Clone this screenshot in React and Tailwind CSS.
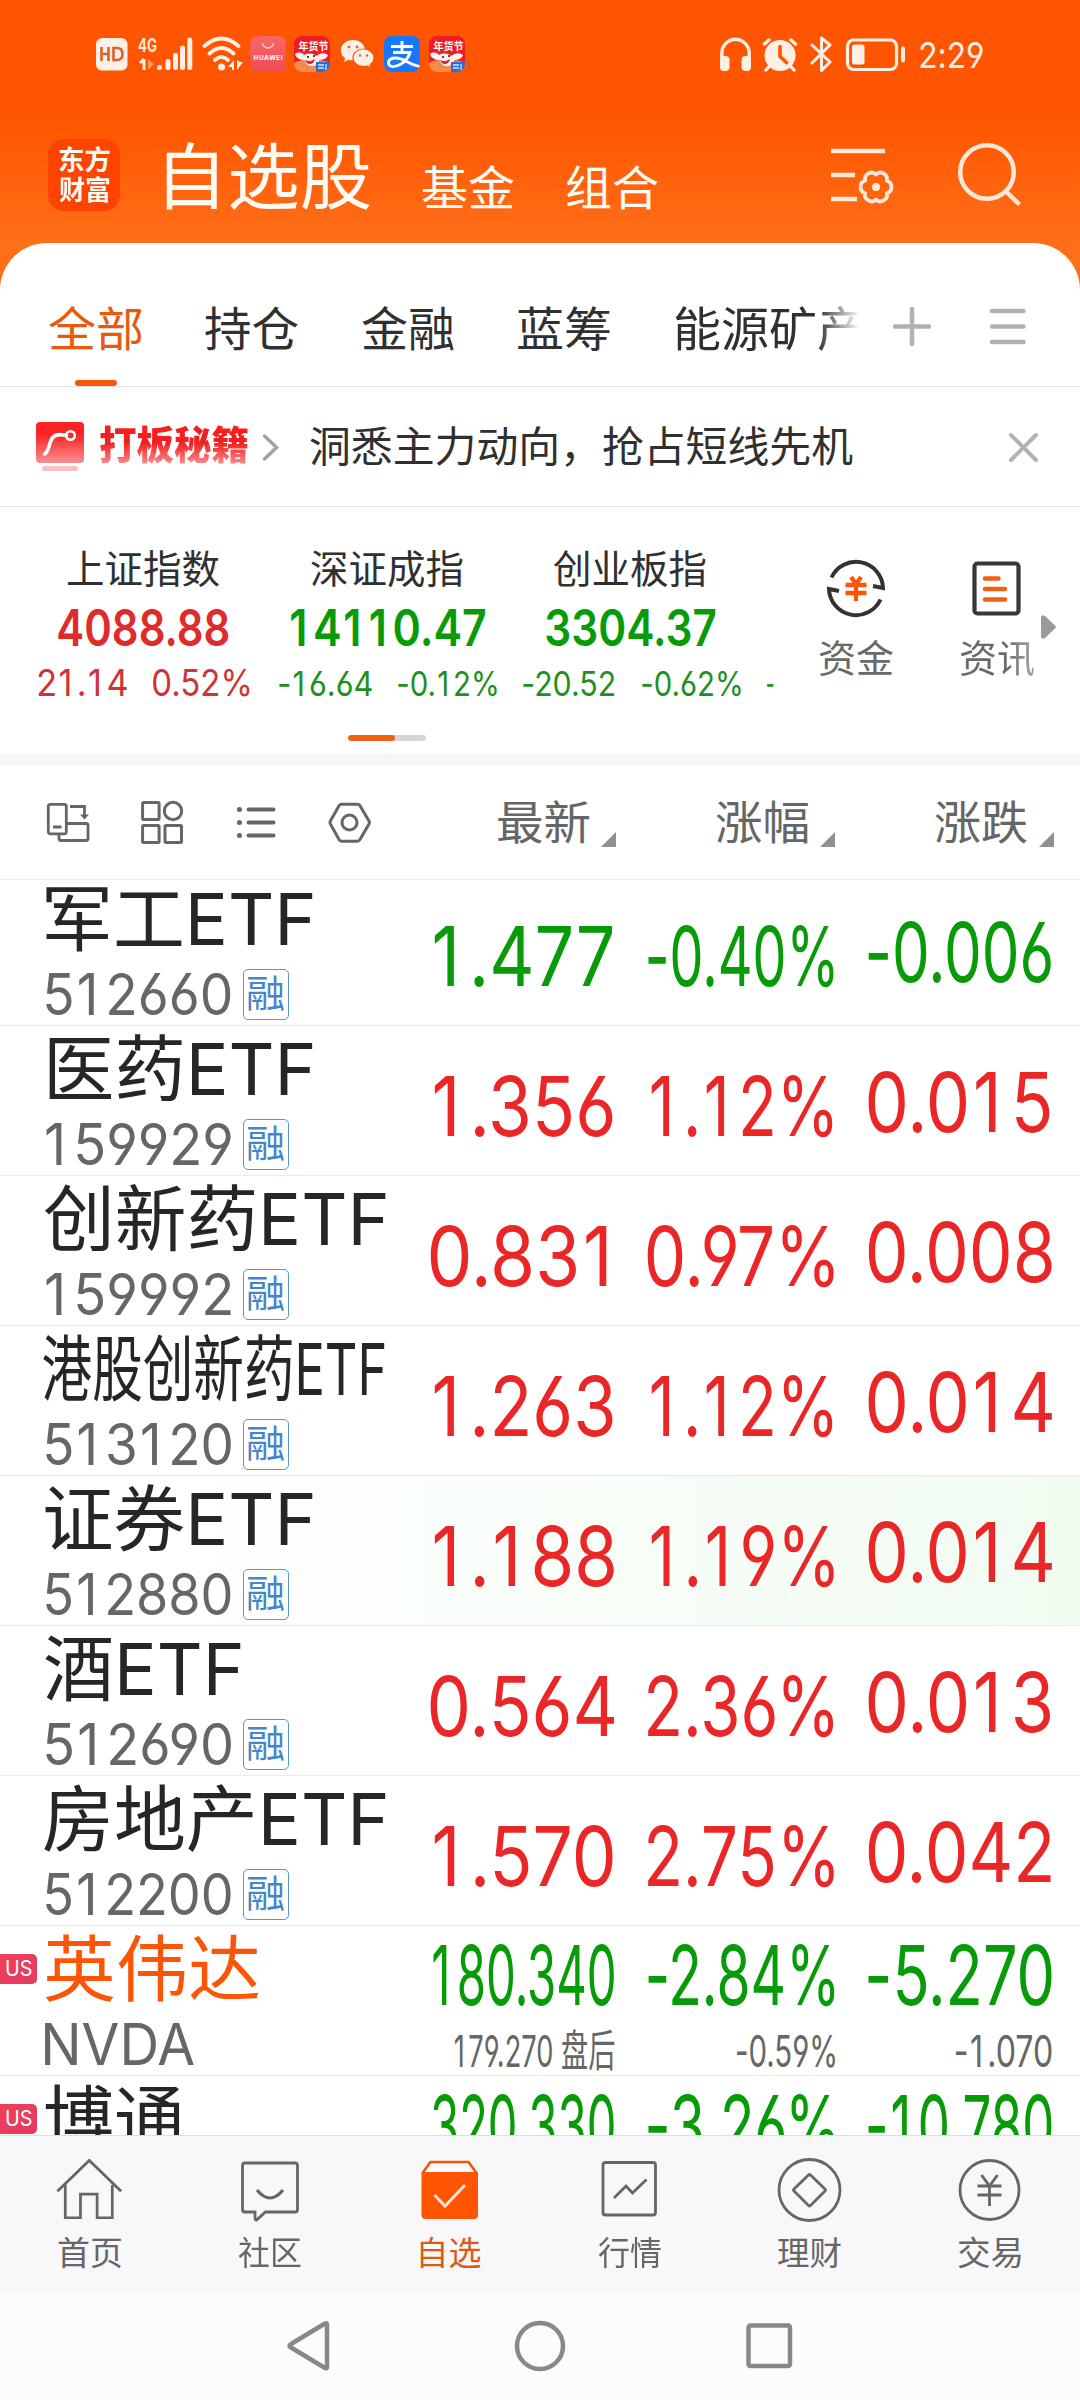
import { useLayoutEffect, useRef } from "react";
import clsx from "clsx";

const RED = "text-[#ea2626]";
const GREEN = "text-[#079c07]";

const stocks = [
  { name: "军工ETF", nameBox: "ml-[46px] w-[266px]", code: "512660", price: "1.477", priceBox: "ml-[434px] w-[178px]", pct: "-0.40%", pctBox: "ml-[648px] w-[186px]", change: "-0.006", changeBox: "w-[183px]", down: true },
  { name: "医药ETF", nameBox: "ml-[49px] w-[263px]", code: "159929", price: "1.356", priceBox: "ml-[434px] w-[179px]", pct: "1.12%", pctBox: "ml-[651px] w-[182px]", change: "0.015", changeBox: "w-[182px]" },
  { name: "创新药ETF", nameBox: "ml-[44px] w-[341px]", code: "159992", price: "0.831", priceBox: "ml-[430px] w-[177px]", pct: "0.97%", pctBox: "ml-[647px] w-[187px]", change: "0.008", changeBox: "w-[184px]" },
  { name: "港股创新药ETF", nameBox: "ml-[43px] w-[341px]", code: "513120", price: "1.263", priceBox: "ml-[434px] w-[179px]", pct: "1.12%", pctBox: "ml-[651px] w-[182px]", change: "0.014", changeBox: "w-[184px]" },
  { name: "证券ETF", nameBox: "ml-[45px] w-[267px]", code: "512880", price: "1.188", priceBox: "ml-[434px] w-[180px]", pct: "1.19%", pctBox: "ml-[651px] w-[183px]", change: "0.014", changeBox: "w-[184px]", flash: true },
  { name: "酒ETF", nameBox: "ml-[45px] w-[195px]", code: "512690", price: "0.564", priceBox: "ml-[430px] w-[184px]", pct: "2.36%", pctBox: "ml-[648px] w-[186px]", change: "0.013", changeBox: "w-[183px]" },
  { name: "房地产ETF", nameBox: "ml-[44px] w-[341px]", code: "512200", price: "1.570", priceBox: "ml-[434px] w-[179px]", pct: "2.75%", pctBox: "ml-[648px] w-[186px]", change: "0.042", changeBox: "w-[183px]" },
];

const usStocks = [
  { name: "英伟达", nameBox: "w-[214px] text-[#fb5607]", code: "NVDA", price: "180.340", pct: "-2.84%", change: "-5.270", after: { price: "179.270 盘后", pct: "-0.59%", change: "-1.070" } },
  { name: "博通", nameBox: "w-[138px] text-[#262626]", code: "AVGO", price: "320.330", pct: "-3.26%", change: "-10.780" },
];

// side padding that brings a "1" up to the width of the other digits, in em
const ONE_LEFT = 0.04;
const ONE_RIGHT = 0.13;

// Squeezes or stretches a single line of text so its ink fills the box width
const Fit = ({ className, children }) => {
  const ref = useRef(null);

  useLayoutEffect(() => {
    const el = ref.current;
    const text = el.textContent;
    const style = getComputedStyle(el);
    const size = parseFloat(style.fontSize);
    const ctx = document.createElement("canvas").getContext("2d");
    ctx.font = `${style.fontWeight} ${style.fontSize} ${style.fontFamily}`;
    const m = ctx.measureText(text);
    const left = -m.actualBoundingBoxLeft + (text.startsWith("1") ? ONE_LEFT * size : 0);
    const right = m.width - m.actualBoundingBoxRight + (text.endsWith("1") ? ONE_RIGHT * size : 0);
    const scale = el.parentElement.clientWidth / (el.offsetWidth - left - right);
    el.style.transform = `translateX(${-left * scale}px) scaleX(${scale})`;
  }, [children]);

  return (
    <span className={clsx("block shrink-0 leading-none whitespace-nowrap", className)}>
      <span ref={ref} className="block w-max origin-left">
        {children.split(/(1)/).map((part, i) =>
          part === "1" ? (
            <span key={i} className="pr-[0.13em] pl-[0.04em]">1</span>
          ) : (
            part
          )
        )}
      </span>
    </span>
  );
};

const PromoAppIcon = ({ className }) => (
  <svg className={className} width="36" height="36" viewBox="0 0 36 36">
    <defs>
      <clipPath id="promoClip">
        <rect width="36" height="36" rx="8" />
      </clipPath>
    </defs>
    <g clipPath="url(#promoClip)">
      <rect width="36" height="36" fill="#ee1d23" />
      <path d="M0 27c8-5 26-5 36 0v10H0z" fill="#f58a4b" />
      <path d="M1 18c3-2 7-2 9 1 4-2 9-2 12 1 4-3 8-4 12-1-1 4-6 5-9 5-1 4-4 6-7 6s-7-2-7-6c-5 0-9-2-10-6z" fill="#fff1ee" />
      <path d="M11 24c3 2 7 1 10-1-1 4-3 5-5 5s-4-1-5-4z" fill="#d5273a" />
      <circle cx="14" cy="21" r="1.100" fill="#222" />
      <circle cx="20" cy="20" r="1.100" fill="#222" />
      <rect x="22" y="26" width="14" height="10" fill="#2b6fd0" />
      <path d="M24 29h6M24 32h6M32 28v6" stroke="#cfe2ff" strokeWidth="1.300" />
    </g>
    <text x="19.500" y="13.500" textAnchor="middle" fontSize="10" fontWeight="700" fill="#fff">年货节</text>
  </svg>
);

const StatusBar = () => (
  <div className="flex h-[108px] items-start pt-9 text-[#ffefe4]">
    <svg className="ml-[95px]" width="34" height="36" viewBox="0 0 34 36">
      <rect x="1" y="2" width="31.500" height="32.500" rx="6" fill="currentColor" />
      <path d="M6.500 11v14M13.500 11v14M6.500 18h7M18.500 12v12h3.500q5.500 0 5.500-6t-5.500-6z" fill="none" stroke="#d9622c" strokeWidth="2.600" />
    </svg>
    <svg className="ml-[9px] overflow-visible" width="56" height="36" viewBox="0 0 56 36">
      <text x="0" y="15.500" fontSize="19" fontWeight="600" fill="currentColor" textLength="19" lengthAdjust="spacingAndGlyphs">4G</text>
      <path d="M6 23v11M6 23l-4 4" stroke="currentColor" strokeWidth="2.800" fill="none" />
      <path d="M10 23v11l6-6z" fill="#ff9a63" />
      <g stroke="currentColor" strokeWidth="5" strokeLinecap="round">
        <path d="M21.500 31.500v.1M30 25.500v6M37.500 19.500v12M44.500 12v19.500M51.800 4v27.500" />
      </g>
    </svg>
    <svg className="ml-[8px]" width="42" height="36" viewBox="0 0 42 36">
      <g fill="none" stroke="currentColor" strokeWidth="3.800" strokeLinecap="round">
        <path d="M2.500 10q17-15 34 0M7.500 17.500q12-11 24 0M13 24q6.500-6 13 0" />
      </g>
      <circle cx="19.500" cy="31" r="3.500" fill="currentColor" />
      <path d="M32 24v10h-2v-3h-4zM35 24v10l6-8h-3z" fill="currentColor" />
    </svg>
    <svg className="ml-[6px]" width="36" height="36" viewBox="0 0 36 36">
      <defs>
        <linearGradient id="storeGradient" x1="0" y1="0" x2="0" y2="1">
          <stop stopColor="#f9696a" />
          <stop offset="1" stopColor="#ee4a52" />
        </linearGradient>
      </defs>
      <rect width="36" height="36" rx="8" fill="url(#storeGradient)" />
      <path d="M12.500 7a5.500 5 0 0 0 11 0" fill="none" stroke="#ffd9d6" strokeWidth="1.400" />
      <text x="3.500" y="24" fontSize="6.500" fontWeight="700" fill="#fff" textLength="29">HUAWEI</text>
    </svg>
    <PromoAppIcon className="ml-[8px]" />
    <svg className="ml-[10px]" width="36" height="36" viewBox="0 0 36 36">
      <path d="M13 4C6 4 .8 8.700.8 14.300c0 3.200 1.600 5.900 4.200 7.800L4 26l4.500-2.300c1.500.4 3 .6 4.500.6 7 0 12-4.500 12-10S20 4 13 4z" fill="currentColor" />
      <path d="M23.500 13C17.500 13 13 17 13 21.800s4.500 8.700 10.500 8.700c1.300 0 2.600-.2 3.800-.5L31 32l-.8-3.400c2.400-1.600 3.800-4 3.800-6.800 0-4.800-4.500-8.800-10.500-8.800z" fill="currentColor" stroke="#ff5500" strokeWidth="1.200" />
      <g fill="#e0682f">
        <circle cx="9" cy="11" r="1.400" />
        <circle cx="17" cy="11" r="1.400" />
        <circle cx="20" cy="19.500" r="1.200" />
        <circle cx="27" cy="19.500" r="1.200" />
      </g>
    </svg>
    <svg className="ml-[8px]" width="36" height="36" viewBox="0 0 36 36">
      <rect width="36" height="36" rx="8" fill="#1677ff" />
      <path d="M7 10.500h22M18 5v11M9 16.500h17q-2 7-9 11.500-5 3-9 2.500-4-1-3.500-4.500 1-4 7-4 5 0 11 3.500 6 3.500 13 5" fill="none" stroke="#fff" strokeWidth="2.800" />
    </svg>
    <PromoAppIcon className="ml-[9px]" />

    <svg className="ml-[254px]" width="34" height="36" viewBox="0 0 34 36">
      <path d="M2.800 25V17.500a13 13.500 0 0 1 27.400 0V25" fill="none" stroke="currentColor" strokeWidth="3.400" />
      <rect x="1" y="20" width="9.500" height="15" rx="4" fill="currentColor" />
      <rect x="22.500" y="20" width="9.500" height="15" rx="4" fill="currentColor" />
    </svg>
    <svg className="ml-[9px]" width="36" height="36" viewBox="0 0 36 36">
      <circle cx="18" cy="19.500" r="15.500" fill="currentColor" />
      <path d="M2.500 8L7 4M33.500 8L29 4M7.500 30l-3.500 4M28.500 30l3.500 4" stroke="currentColor" strokeWidth="3.400" strokeLinecap="round" />
      <path d="M18 10.500v10l6.500 6" fill="none" stroke="#ff5500" strokeWidth="3.600" strokeLinecap="round" />
    </svg>
    <svg className="ml-[11px]" width="26" height="36" viewBox="0 0 26 36">
      <path d="M3 9l18 17-8.500 8.500V2L21 9 3 27" fill="none" stroke="currentColor" strokeWidth="3" strokeLinejoin="round" strokeLinecap="round" />
    </svg>
    <svg className="ml-[10px]" width="62" height="36" viewBox="0 0 62 36">
      <rect x="2.500" y="4" width="49" height="29.500" rx="6" fill="none" stroke="currentColor" strokeWidth="3.200" />
      <rect x="7" y="8.500" width="12.500" height="20" rx="2.500" fill="currentColor" />
      <rect x="56" y="10.500" width="4" height="16" rx="2" fill="currentColor" />
    </svg>
    <Fit className="mt-[1px] ml-[13px] w-[63px] text-[36px]">2:29</Fit>
  </div>
);

const TitleBar = () => (
  <div className="flex h-[135px] items-start text-[#fffaf2]">
    <div className="mt-[31px] ml-12 flex size-[72px] flex-col items-center rounded-2xl bg-[#ff4300] pt-[8px] font-bold">
      <Fit className="h-[30px] w-[51px] text-[27px]">东方</Fit>
      <Fit className="w-[51px] text-[27px]">财富</Fit>
    </div>
    <Fit className="mt-[33px] ml-[46px] w-[204px] text-[72px]">自选股</Fit>
    <Fit className="mt-[56px] ml-[52px] w-[92px] text-[47px]">基金</Fit>
    <Fit className="mt-[56px] ml-[52px] w-[92px] text-[47px]">组合</Fit>
    <svg className="mt-[38px] ml-[172px] text-[#ffe9d6]" width="66" height="60" viewBox="0 0 66 60" fill="none" stroke="currentColor" strokeWidth="4.500">
      <path d="M1 5h54M1 29h24M1 53h26" />
      <g transform="translate(46 41)">
        <path d="M0-12.500C4.500-17 12.500-12.400 10.800-6.250C17-4.600 17 4.600 10.800 6.250C12.500 12.400 4.500 17 0 12.500C-4.500 17-12.500 12.400-10.800 6.250C-17 4.600-17-4.600-10.800-6.250C-12.500-12.400-4.500-17 0-12.500Z" strokeWidth="3.800" strokeLinejoin="round" />
        <circle r="4" fill="currentColor" stroke="none" />
      </g>
    </svg>
    <svg className="mt-[33px] ml-[61px] text-[#ffe9d6]" width="66" height="66" viewBox="0 0 66 66" fill="none" stroke="currentColor" strokeWidth="4.500">
      <circle cx="30" cy="31" r="26.800" />
      <path d="M48.500 50l14 13.500" />
    </svg>
  </div>
);

const Tabs = () => (
  <div className="flex h-36 items-start border-b border-[#e4e4e6] text-[47px] text-[#303030]">
    <div className="mt-[62px] ml-[49px] flex flex-col items-center text-[#ea5a0c]">
      <Fit className="w-[93px]">全部</Fit>
      <span className="mt-[28px] h-[6px] w-[42px] rounded-full bg-[#fb5607]" />
    </div>
    <Fit className="mt-[62px] ml-[63px] w-[93px]">持仓</Fit>
    <Fit className="mt-[62px] ml-[64px] w-[92px]">金融</Fit>
    <Fit className="mt-[62px] ml-[64px] w-[92px]">蓝筹</Fit>
    <Fit className="mt-[62px] ml-[65px] w-[187px] [mask-image:linear-gradient(to_right,black_76%,transparent_99%)]">能源矿产</Fit>
    <svg className="mt-[62px] ml-[29px]" width="44" height="44" viewBox="0 0 44 44" stroke="#b2b2b2" strokeWidth="4.500" strokeLinecap="round">
      <path d="M4 21.500h34M21 4v35" />
    </svg>
    <svg className="mt-[62px] ml-[53px]" width="44" height="44" viewBox="0 0 44 44" stroke="#b2b2b2" strokeWidth="4.500" strokeLinecap="round">
      <path d="M4 6h31.500M4 21.500h31.500M4 37h31.500" />
    </svg>
  </div>
);

const Banner = () => (
  <div className="flex h-[120px] items-start border-b border-[#e4e4e6]">
    <svg className="mt-[35px] ml-9" width="48" height="50" viewBox="0 0 48 50">
      <defs>
        <linearGradient id="hotGradient" x1="0" y1="0" x2="0" y2="1">
          <stop offset="0.300" stopColor="#fb2323" />
          <stop offset="1" stopColor="#f88f92" />
        </linearGradient>
      </defs>
      <rect width="48" height="41" rx="4" fill="url(#hotGradient)" />
      <path d="M8.500 32q3-1 5.500-11t13-8h3.500" fill="none" stroke="#fff" strokeWidth="3.600" strokeLinecap="round" />
      <circle cx="34.500" cy="13.500" r="4.300" fill="none" stroke="#fff" strokeWidth="2.600" />
      <rect x="6" y="44" width="36" height="5" rx="2" fill="#fbc0c0" />
    </svg>
    <Fit className="mt-[38px] ml-4 w-[148px] text-[39px] font-black text-transparent *:bg-[linear-gradient(to_bottom,#f41f1f_45%,#fa8a8a)] *:bg-clip-text">
      打板秘籍
    </Fit>
    <svg className="mt-[46px] ml-[14px]" width="18" height="30" viewBox="0 0 18 30" fill="none" stroke="#a3a3a3" strokeWidth="3.500" strokeLinecap="round">
      <path d="M2.500 3l12 11.500L2.500 26" />
    </svg>
    <Fit className="mt-[39px] ml-[30px] w-[543px] text-[42px] text-[#303030]">洞悉主力动向，抢占短线先机</Fit>
    <svg className="mt-[44px] ml-[154px]" width="34" height="34" viewBox="0 0 34 34" stroke="#b2b2b2" strokeWidth="4" strokeLinecap="round">
      <path d="M4 4l25 25M29 4L4 29" />
    </svg>
  </div>
);

const Indexes = () => (
  <div className="flex h-[246px] items-start overflow-hidden">
    <div className="flex w-[783px] flex-col">
      <div className="flex pt-[42px] text-[39px] text-[#303030]">
        <Fit className="ml-[67px] w-[152px]">上证指数</Fit>
        <Fit className="ml-[92px] w-[152px]">深证成指</Fit>
        <Fit className="ml-[91px] w-[152px]">创业板指</Fit>
      </div>
      <div className="flex pt-[14px] text-[51px] font-semibold">
        <Fit className="ml-[58px] w-[171px] text-[#df2b2b]">4088.88</Fit>
        <Fit className={clsx("ml-[62px] w-[195px]", GREEN)}>14110.47</Fit>
        <Fit className={clsx("ml-[60px] w-[170px]", GREEN)}>3304.37</Fit>
      </div>
      <div className="flex items-end pt-[11px] text-[34px] text-[#1f8f1f]">
        <Fit className="ml-[38px] w-[89px] text-[37px] text-[#cf3434]">21.14</Fit>
        <Fit className="ml-[26px] w-[97px] text-[37px] text-[#cf3434]">0.52%</Fit>
        <Fit className="ml-[29px] w-[93px]">-16.64</Fit>
        <Fit className="ml-[26px] w-[99px]">-0.12%</Fit>
        <Fit className="ml-[26px] w-[92px]">-20.52</Fit>
        <Fit className="ml-[27px] w-[99px]">-0.62%</Fit>
        <Fit className="ml-[26px] w-[7px]">-</Fit>
      </div>
      <div className="mt-[34px] ml-[348px] h-[6px] w-[78px] overflow-hidden rounded-full bg-[#d3d7da]">
        <div className="h-full w-[47px] rounded-full bg-[#f05f14]" />
      </div>
    </div>
    <div className="ml-9 flex flex-col items-center pt-[50px] text-[38px] text-[#6a6a6a]">
      <svg width="62" height="62" viewBox="0 0 62 62" fill="none">
        <g stroke="#333" strokeWidth="4">
          <path d="M6.500 20.500A27 27 0 0 1 58 31l-10-2" />
          <path d="M55.500 42.500A27 27 0 0 1 4 32l10 2" />
        </g>
        <path d="M26 20l5 7 5-7M20.500 28h21M20.500 36h21M31 27v17" stroke="#fb5607" strokeWidth="4.300" />
      </svg>
      <Fit className="mt-[20px] w-[74px]">资金</Fit>
    </div>
    <div className="ml-[67px] flex flex-col items-center pt-[50px] text-[38px] text-[#6a6a6a]">
      <svg width="62" height="62" viewBox="0 0 62 62" fill="none">
        <rect x="8.500" y="6.500" width="44" height="50" rx="3" stroke="#383838" strokeWidth="4.200" />
        <path d="M19 21.500h13.500M19 32h20M19 42.500h20" stroke="#f05f14" strokeWidth="4.500" strokeLinecap="round" />
      </svg>
      <Fit className="mt-[20px] w-[74px] [mask-image:linear-gradient(to_right,black_60%,#0009)]">资讯</Fit>
    </div>
    <svg className="mt-[107px] ml-[7px]" width="16" height="26" viewBox="0 0 16 26">
      <path d="M0 3q1-3 4-1l10.500 10q1 1 0 2L4 24q-3 2-4-1z" fill="#9a9a9a" />
    </svg>
  </div>
);

const SortMark = ({ className }) => (
  <svg className={clsx("mt-[67px] shrink-0", className)} width="15" height="15" viewBox="0 0 15 15">
    <path d="M15 0v15H0z" fill="#8f8f96" />
  </svg>
);

const ListHeader = () => (
  <div className="flex h-[115px] items-start border-b border-[#ebebeb] text-[46px] text-[#666]">
    <svg className="mt-[35px] ml-[46px]" width="46" height="44" viewBox="0 0 46 44" fill="none" stroke="currentColor" strokeWidth="2.800">
      <rect x="2.300" y="4.300" width="18" height="29.500" rx="2" />
      <path d="M7 27h8.500M24 6.500h14.500v9M13 34v4.500q0 2 2 2h25q2 0 2-2v-13q0-2-2-2H21" />
      <path d="M34 14.500h9l-4.500 5z" fill="currentColor" stroke="none" />
    </svg>
    <svg className="ml-[48px] mt-[35px]" width="46" height="46" viewBox="0 0 46 46" fill="none" stroke="currentColor" strokeWidth="3">
      <rect x="2.600" y="2.600" width="16.500" height="17" rx="1" />
      <circle cx="33" cy="11" r="8.700" />
      <rect x="2.600" y="25.500" width="16.500" height="17" rx="1" />
      <rect x="25" y="25.500" width="16.500" height="17" rx="1" />
    </svg>
    <svg className="mt-[36px] ml-[50px]" width="46" height="44" viewBox="0 0 46 44" fill="none" stroke="currentColor" strokeWidth="4" strokeLinecap="round">
      <path d="M12.500 8.500h25M12.500 21.500h25M12.500 34.500h25" />
      <path d="M3.500 8.500v.1M3.500 21.500v.1M3.500 34.500v.1" strokeWidth="5" />
    </svg>
    <svg className="mt-[36px] ml-[46px]" width="46" height="44" viewBox="0 0 46 44" fill="none" stroke="currentColor" strokeWidth="3">
      <path d="M13.500 3.200h16q1.500 0 2.500 1.500l9 15.300q.8 1.500 0 3l-9 15.500q-1 1.700-2.500 1.700h-16q-1.500 0-2.500-1.700L2.400 23q-.8-1.500 0-3L11 4.700q1-1.500 2.500-1.500z" />
      <circle cx="21.500" cy="21.500" r="7.500" strokeWidth="3" />
    </svg>
    <Fit className="mt-[34px] ml-[124px] w-[92px]">最新</Fit>
    <SortMark className="ml-[11px]" />
    <Fit className="mt-[34px] ml-[100px] w-[92px]">涨幅</Fit>
    <SortMark className="ml-[12px]" />
    <Fit className="mt-[34px] ml-[100px] w-[92px]">涨跌</Fit>
    <SortMark className="ml-[12px]" />
  </div>
);

// name column on the left, the three figures share the same grid cell row
const StockRow = ({ stock }) => (
  <div
    className={clsx(
      "grid h-[150px] shrink-0 grid-cols-1 border-b border-[#ebebeb] *:col-start-1 *:row-start-1",
      stock.flash && "bg-linear-to-r from-white from-10% to-[#f1fcf1]"
    )}
  >
    <div className="pt-[7px]">
      <Fit className={clsx("text-[72px] text-[#262626]", stock.nameBox)}>{stock.name}</Fit>
      <div className="mt-[11px] ml-[46px] flex items-start">
        <Fit className="w-[185px] text-[57px] text-[#666]">{stock.code}</Fit>
        <span className="mt-[3px] ml-3 flex h-[51px] w-[46px] justify-center rounded-[5px] border-[1.5px] border-[#5d95d0] pt-[4px] text-[38px] text-[#4585c9]">
          <Fit className="w-[36px]">融</Fit>
        </span>
      </div>
    </div>
    <div className={clsx("pt-[39px] text-[83px]", stock.down ? GREEN : RED)}>
      <Fit className={stock.priceBox}>{stock.price}</Fit>
    </div>
    <div className={clsx("pt-[39px] text-[83px]", stock.down ? GREEN : RED)}>
      <Fit className={stock.pctBox}>{stock.pct}</Fit>
    </div>
    <div className={clsx("pt-[35px] pl-[868px] text-[83px]", stock.down ? GREEN : RED)}>
      <Fit className={stock.changeBox}>{stock.change}</Fit>
    </div>
  </div>
);

const UsStockRow = ({ stock }) => (
  <div className="flex h-[150px] shrink-0 items-start border-b border-[#ebebeb]">
    <span className="mt-[28px] flex h-[30px] w-[37px] rounded-r-[5px] bg-linear-to-br from-[#f0405a] to-[#e23a60] pt-[4px] pl-[6px] text-white">
      <Fit className="w-[26px] text-[21px]">US</Fit>
    </span>
    <div className="ml-[8px] w-[388px] pt-[7px]">
      <Fit className={clsx("text-[72px]", stock.nameBox)}>{stock.name}</Fit>
      <Fit className="mt-[11px] w-[149px] text-[57px] text-[#666]">{stock.code}</Fit>
    </div>
    <div className="flex w-[181px] flex-col items-end pt-[8px]">
      <Fit className={clsx("w-[181px] text-[83px]", GREEN)}>{stock.price}</Fit>
      {stock.after && <Fit className="mt-[12px] w-[159px] text-[44px] text-[#666]">{stock.after.price}</Fit>}
    </div>
    <div className="ml-[34px] flex w-[187px] flex-col items-end pt-[8px]">
      <Fit className={clsx("w-[187px] text-[83px]", GREEN)}>{stock.pct}</Fit>
      {stock.after && <Fit className="mt-[12px] w-[98px] text-[44px] text-[#666]">{stock.after.pct}</Fit>}
    </div>
    <div className="ml-[33px] flex w-[184px] flex-col items-end pt-[8px]">
      <Fit className={clsx("w-[184px] text-[83px]", GREEN)}>{stock.change}</Fit>
      {stock.after && <Fit className="mt-[12px] w-[96px] text-[44px] text-[#666]">{stock.after.change}</Fit>}
    </div>
  </div>
);

const tabItems = [
  {
    label: "首页",
    icon: (
      <path d="M3.500 35.500L36 4l32.500 31.500M11.500 29v33.500h15.500V38.500h17v24h15.500V29" transform="translate(0 .5) scale(.98 .98)" />
    ),
  },
  {
    label: "社区",
    icon: (
      <>
        <path d="M11 7h50q2.500 0 2.500 2.500v44q0 2.500-2.500 2.500H31.500l-9 8q-1.500 0-1.500-2v-6h-10q-2.500 0-2.500-2.500v-44Q8.500 7 11 7z" />
        <path d="M23 34q13 16 26 0" strokeWidth="3.200" />
      </>
    ),
  },
  {
    label: "自选",
    active: true,
    icon: (
      <>
        <path d="M7.500 16h56.500v43q0 4-4 4h-48.500q-4 0-4-4z" fill="#ff5500" stroke="none" />
        <path d="M8.500 17l8-11h38l8 11" stroke="#ea5a0c" strokeWidth="2.600" />
        <path d="M20.500 39l10.500 11L51 29" stroke="#ffe6d0" strokeWidth="3" />
      </>
    ),
  },
  {
    label: "行情",
    icon: (
      <>
        <rect x="9" y="6.500" width="52.500" height="52.500" rx="2.500" />
        <path d="M20 42l12-12 6.500 7L52.500 23.500" />
      </>
    ),
  },
  {
    label: "理财",
    icon: (
      <>
        <circle cx="35.500" cy="34" r="30.500" />
        <path d="M34.500 19q1-1 2 0l14.500 14q1 1 0 2L36.500 49.500q-1 1-2 0L20 35q-1-1 0-2z" />
      </>
    ),
  },
  {
    label: "交易",
    icon: (
      <>
        <circle cx="35.500" cy="34" r="29.500" />
        <path d="M27.500 19l8 11 8-11M23.500 30h24M23.500 39h24M35.500 30v20" />
      </>
    ),
  },
];

const BottomTabs = () => (
  <div className="grid h-[157px] grid-cols-6 border-t border-[#dedee0] bg-[#f8f8fa]">
    {tabItems.map((item) => (
      <div
        key={item.label}
        className={clsx("flex flex-col items-center pt-[20px]", item.active ? "text-[#dd5a14]" : "text-[#666]")}
      >
        <svg width="72" height="68" viewBox="0 0 72 68" fill="none" stroke="currentColor" strokeWidth="2.800">
          {item.icon}
        </svg>
        <Fit className={clsx("mt-[13px] text-[33px]", item.active ? "ml-[1px] w-[60px]" : "mr-[1px] w-[63px]")}>
          {item.label}
        </Fit>
      </div>
    ))}
  </div>
);

const SystemNav = () => (
  <div className="flex h-[108px] items-start bg-[#fcfcfc] pt-[26px]">
    <svg className="ml-[284px]" width="512" height="56" viewBox="0 0 512 56" fill="none" stroke="#888" strokeWidth="4.500" strokeLinejoin="round">
      <path d="M43 6.500v42.500q0 2-2 1L7 29.500q-3-1.500 0-3.500L41 5.500q2-1 2 1z" />
      <circle cx="256" cy="28" r="23" />
      <rect x="464.500" y="7.500" width="41.500" height="40.500" rx="2" />
    </svg>
  </div>
);

const App = () => {
  return (
    <div className="flex h-[2400px] w-[1080px] flex-col overflow-hidden bg-[linear-gradient(to_bottom,#ff5500_115px,#ff6f1a_245px)] font-[Inter,'Noto_Sans_CJK_SC',sans-serif] [font-feature-settings:'cv03','cv04','calt'_0]">
      <StatusBar />
      <TitleBar />
      <div className="flex min-h-0 flex-1 flex-col overflow-hidden rounded-t-[47px] bg-white">
        <Tabs />
        <Banner />
        <Indexes />
        <div className="h-3 shrink-0 bg-[#f5f7fa]" />
        <ListHeader />
        <div className="flex min-h-0 flex-1 flex-col overflow-hidden">
          {/* list is scrolled by a few pixels */}
          <div className="-mt-[4px] flex flex-col">
            {stocks.map((stock) => (
              <StockRow key={stock.code} stock={stock} />
            ))}
            {usStocks.map((stock) => (
              <UsStockRow key={stock.code} stock={stock} />
            ))}
          </div>
        </div>
      </div>
      <BottomTabs />
      <SystemNav />
    </div>
  );
};

export default App;
